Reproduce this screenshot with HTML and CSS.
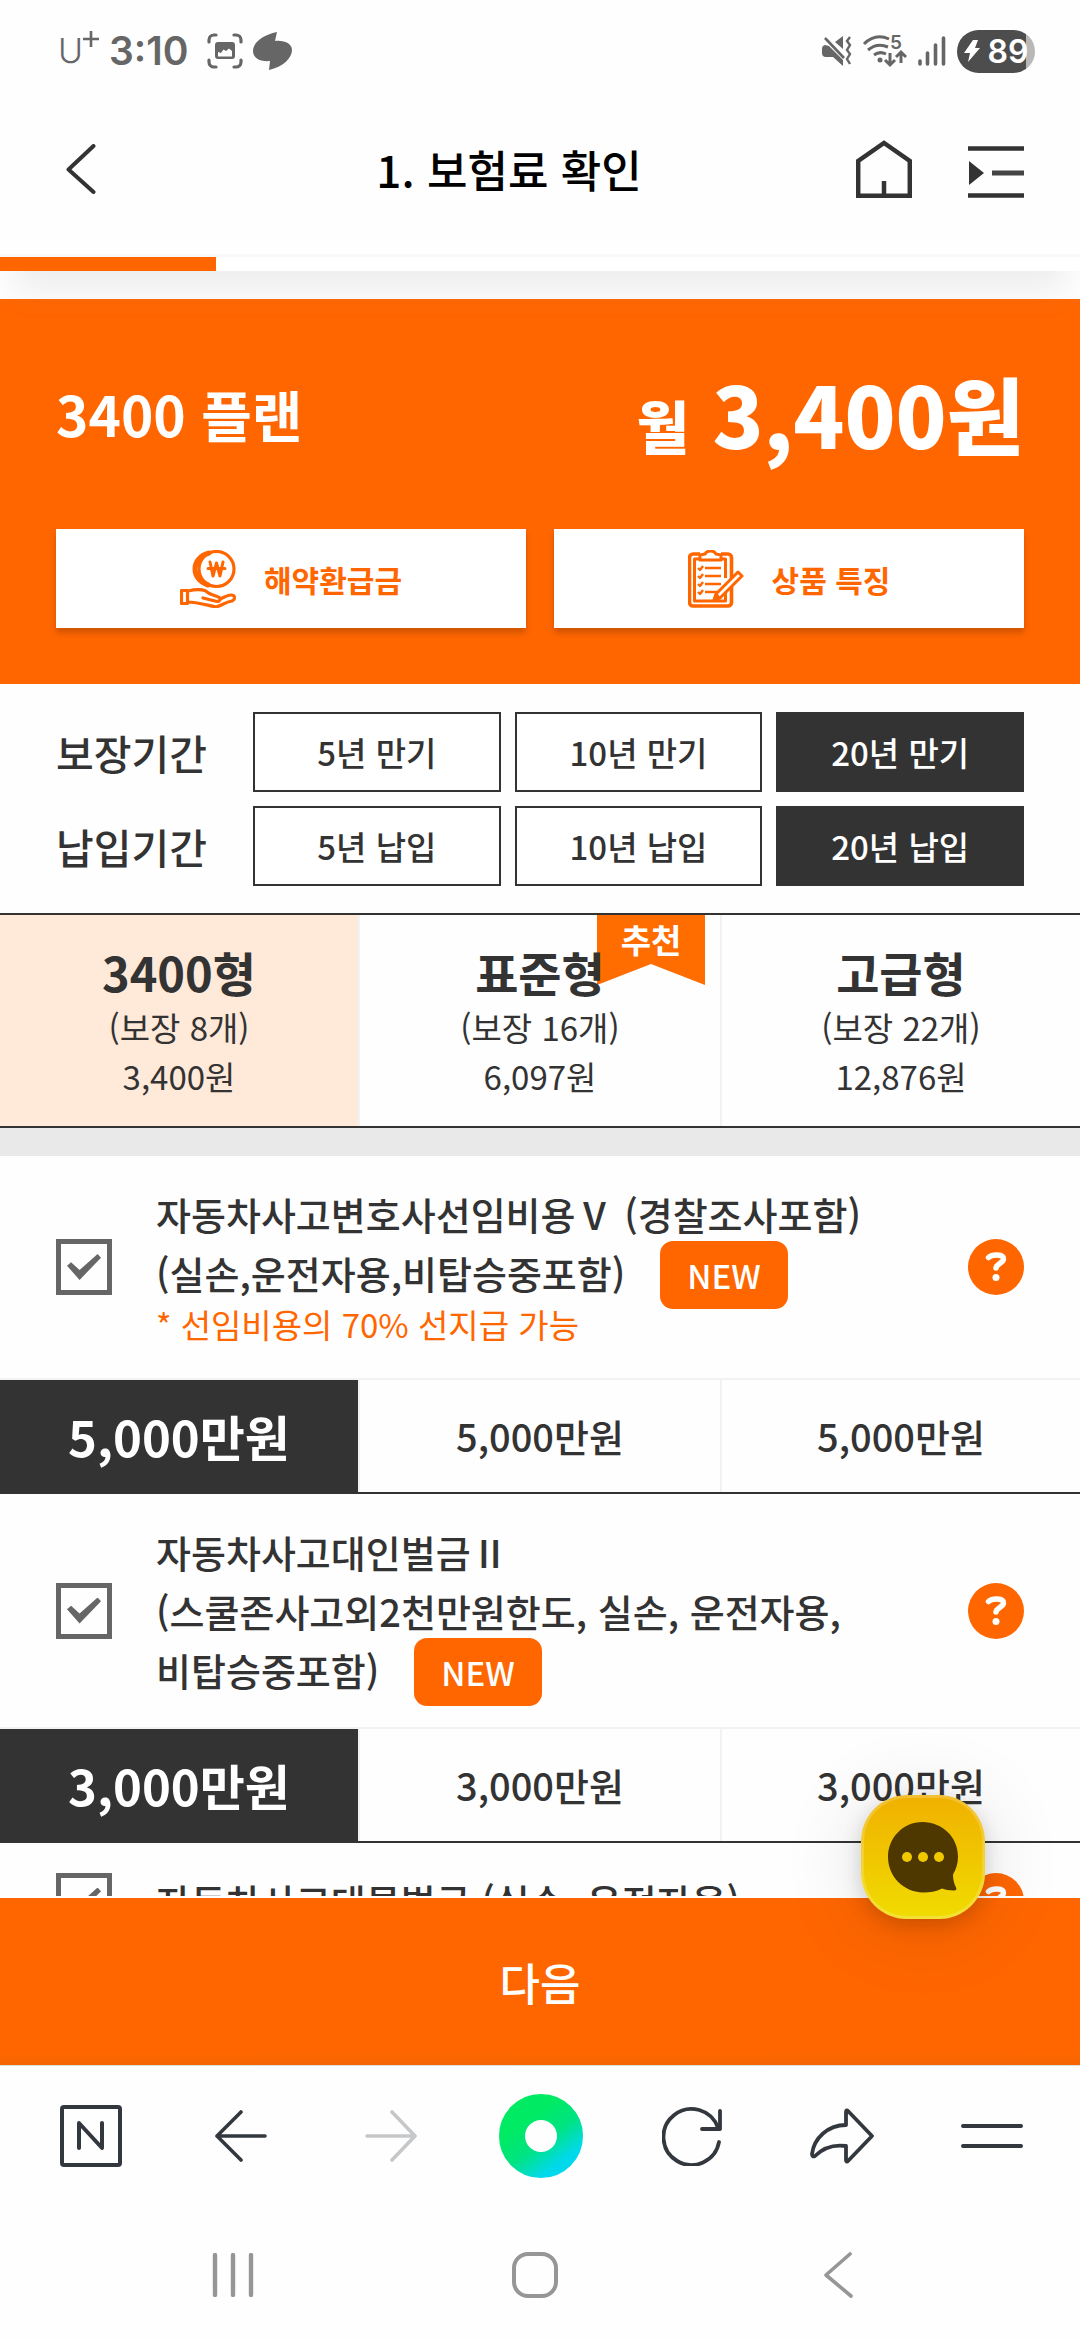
FILE: index.html
```html
<!DOCTYPE html>
<html lang="ko">
<head>
<meta charset="utf-8">
<meta name="viewport" content="width=device-width, initial-scale=1">
<title>1. 보험료 확인</title>
<link rel="stylesheet" href="styles.css">
</head>
<body>
<div class="status-bar">
  <div class="status-left">
    <span class="carrier">U<svg width="16" height="16" viewBox="0 0 16 16"><path d="M8 0v16M0 8h16" stroke="#666" stroke-width="2.6"/></svg></span>
    <span class="clock">3:10</span>
    <svg class="icon-capture" width="36" height="36" viewBox="0 0 36 36"><g fill="none" stroke="#666" stroke-width="3.2" stroke-linecap="round"><path d="M2 9V7a5 5 0 0 1 5-5h2M27 2h2a5 5 0 0 1 5 5v2M34 27v2a5 5 0 0 1-5 5h-2M9 34H7a5 5 0 0 1-5-5v-2"/></g><path fill="#666" fill-rule="evenodd" d="M11 9h14a3 3 0 0 1 3 3v11a3 3 0 0 1-3 3H11a3 3 0 0 1-3-3V12a3 3 0 0 1 3-3zM11 23.500h14V18l-3-2.500-3 2.500-2.500-1.500L14 20l-3-1z"/></svg>
    <svg width="39" height="38" viewBox="0 0 39 38"><path fill="#666" d="M24 0C9 3 0 11 0 19c0 7 7 11 17 10l-1 9c14-3 23-12 23-20 0-6-7-10-17-9z"/></svg>
  </div>
  <div class="status-right">
    <svg width="30" height="30" viewBox="0 0 30 30"><path fill="#666" d="M3 9l4 1 14 14v6l-10-9H4a4 4 0 0 1-4-4v-4a4 4 0 0 1 3-4zM21 0v13l-8-7z"/><path d="M3 2l19 20" stroke="#666" stroke-width="2.600"/><path d="M28 1l-3 4 3 4-3 5 3 4-3 5 3 5" fill="none" stroke="#666" stroke-width="2.400"/></svg>
    <svg class="icon-wifi" width="44" height="32" viewBox="0 0 44 32"><g fill="none" stroke="#666" stroke-width="3"><path d="M1 9C8 2 17 0 26 4M5 15c6-5 13-6 20-3M11 20c4-3 8-3 12-1M27 18v11M22 25l5 5 5-5M38 28V17M33 22l5-5 5 5"/></g><circle cx="17" cy="25" r="2.500" fill="#666"/><text x="27" y="14" class="wifi-band">5</text></svg>
    <svg width="28" height="30" viewBox="0 0 28 30"><path d="M2 25v3M9.500 17v11M17.500 9v19M25.500 2v26" stroke="#666" stroke-width="3.600" stroke-linecap="round"/></svg>
    <span class="battery"><svg width="16" height="22" viewBox="0 0 16 22"><path fill="#fff" d="M9 0h5l-3 8h5L4 22l2-9H0z"/></svg>89</span>
  </div>
</div>

<div class="page-top">
  <header class="header">
    <button class="plain" aria-label="이전"><svg width="30" height="50" viewBox="0 0 30 50"><path d="M27.500 2L2.500 25.500l25 22.500" fill="none" stroke="#333" stroke-width="4" stroke-linecap="round" stroke-linejoin="round"/></svg></button>
    <h1>1. 보험료 확인</h1>
    <div class="header-tools">
      <button class="plain" aria-label="홈"><svg width="56" height="58" viewBox="0 0 56 58"><path d="M2.200 55.800V21L28 3l25.800 18v34.800zM28 55V41" fill="none" stroke="#333" stroke-width="4.500"/></svg></button>
      <button class="plain" aria-label="메뉴"><svg width="56" height="52" viewBox="0 0 56 52"><path d="M0 2.500h56M0 49.500h56" stroke="#333" stroke-width="4.500"/><path d="M24 27h32" stroke="#444" stroke-width="5"/><path d="M1 15v24l15-12z" fill="#333"/></svg></button>
    </div>
  </header>
  <div class="progress"><span class="progress-value"></span></div>
</div>

<main class="content">
  <section class="banner">
    <div class="banner-top">
      <h2>3400 플랜</h2>
      <p class="price"><span class="price-unit">월</span> 3,400원</p>
    </div>
    <div class="banner-actions">
      <button><svg width="56" height="58" viewBox="0 0 56 58"><g fill="none" stroke="#f60" stroke-width="3.200" stroke-linejoin="round" stroke-linecap="round"><circle cx="36.500" cy="19" r="17.500"/><path d="M29 3C10 8 11 30 28 35" stroke-width="5"/><path d="M30 12l3 14 3.500-13L40 26l3-14M28 18.500h17" stroke-width="3"/><path d="M1.500 40.500h6v13h-6zM8 41c8-2 13-2 18 0 3 4 10 4 14 7 1 3-2 4-5 3l-12-3M8 52c8 0 18 3 28 5 5-1 9-5 16-6 4-2 3-6-1-6-4 0-8 3-11 4"/></g></svg>해약환급금</button>
      <button><svg width="56" height="58" viewBox="0 0 56 58"><g fill="none" stroke="#f60" stroke-linejoin="round"><path d="M12 4H5a3.500 3.500 0 0 0-3.500 3.500v45A3.500 3.500 0 0 0 5 56h35a3.500 3.500 0 0 0 3.500-3.500v-45A3.500 3.500 0 0 0 40 4h-7" stroke-width="3.600"/><path d="M12 9H6.500v42h31V38M37.500 28V9H33" stroke-width="3"/><path d="M12 10V5l5-1c2-4 9-4 11 0l5 1v5z" stroke-width="3"/><path d="M17 18h16M17 26h16M17 34h16M17 42h12" stroke-width="2.400"/><path d="M10 18l2 2 3-4M10 26l2 2 3-4M10 34l2 2 3-4M10 42l2 2 3-4" stroke-width="2.400"/><path d="M50 22l4 4-22 22-6 2 2-6z" fill="#fff" stroke-width="3"/></g><path d="M29 43l-3 7 7-2z" fill="#f60"/></svg>상품 특징</button>
    </div>
  </section>

  <section class="periods">
    <div class="period-row">
      <h3>보장기간</h3>
      <button>5년 만기</button>
      <button>10년 만기</button>
      <button class="selected">20년 만기</button>
    </div>
    <div class="period-row">
      <h3>납입기간</h3>
      <button>5년 납입</button>
      <button>10년 납입</button>
      <button class="selected">20년 납입</button>
    </div>
  </section>

  <section class="plans">
    <button class="selected"><strong>3400형</strong><span>(보장 8개)</span><span>3,400원</span></button>
    <button><em class="ribbon">추천</em><strong>표준형</strong><span>(보장 16개)</span><span>6,097원</span></button>
    <button><strong>고급형</strong><span>(보장 22개)</span><span>12,876원</span></button>
  </section>

  <section class="coverage">
    <div class="coverage-head">
      <input type="checkbox" id="cover-1" checked>
      <label for="cover-1">자동차사고변호사선임비용Ⅴ (경찰조사포함)<br>(실손,운전자용,비탑승중포함)<span class="badge">NEW</span><small>* 선임비용의 70% 선지급 가능</small></label>
      <button class="plain" aria-label="도움말"><svg width="56" height="56" viewBox="0 0 56 56"><circle cx="28" cy="28" r="28" fill="#f60"/><path d="M20.500 18.500c4-3.500 15-3.500 15 1.500 0 4-7.500 5-7.500 9" fill="none" stroke="#fff" stroke-width="5.500" stroke-linecap="round" stroke-linejoin="round"/><circle cx="28" cy="38.500" r="3.500" fill="#fff"/></svg></button>
    </div>
    <div class="amounts"><span class="selected">5,000만원</span><span>5,000만원</span><span>5,000만원</span></div>
  </section>

  <section class="coverage">
    <div class="coverage-head">
      <input type="checkbox" id="cover-2" checked>
      <label for="cover-2">자동차사고대인벌금Ⅱ<br>(스쿨존사고외2천만원한도, 실손, 운전자용,<br>비탑승중포함)<span class="badge">NEW</span></label>
      <button class="plain" aria-label="도움말"><svg width="56" height="56" viewBox="0 0 56 56"><circle cx="28" cy="28" r="28" fill="#f60"/><path d="M20.500 18.500c4-3.500 15-3.500 15 1.500 0 4-7.500 5-7.500 9" fill="none" stroke="#fff" stroke-width="5.500" stroke-linecap="round" stroke-linejoin="round"/><circle cx="28" cy="38.500" r="3.500" fill="#fff"/></svg></button>
    </div>
    <div class="amounts"><span class="selected">3,000만원</span><span>3,000만원</span><span>3,000만원</span></div>
  </section>

  <section class="coverage">
    <div class="coverage-head">
      <input type="checkbox" id="cover-3" checked>
      <label for="cover-3">자동차사고대물벌금 (실손, 운전자용)</label>
      <button class="plain" aria-label="도움말"><svg width="56" height="56" viewBox="0 0 56 56"><circle cx="28" cy="28" r="28" fill="#f60"/><path d="M20.500 18.500c4-3.500 15-3.500 15 1.500 0 4-7.500 5-7.500 9" fill="none" stroke="#fff" stroke-width="5.500" stroke-linecap="round" stroke-linejoin="round"/><circle cx="28" cy="38.500" r="3.500" fill="#fff"/></svg></button>
    </div>
  </section>
</main>

<div class="cta">
  <button class="chat" aria-label="채팅 상담"><svg width="72" height="72" viewBox="0 0 72 72"><path fill="#4e3800" d="M35.500 1C55 1 71 16 71 35.500c0 7-2 13-5 18 0 5 1 9 3 13 1 2 0 3-2 3-5 0-9-1-12-2-6 3-12 4-19 4C16 71 1 55 1 36S16 1 35.500 1z"/><g fill="#f0c800"><circle cx="20" cy="36" r="5"/><circle cx="36" cy="36" r="5"/><circle cx="52" cy="36" r="5"/></g></svg></button>
  <button class="next">다음</button>
</div>

<nav class="toolbar">
  <button class="plain" aria-label="네이버 홈"><svg width="64" height="64" viewBox="0 0 64 64"><g fill="none" stroke="#33383f" stroke-width="4" stroke-linecap="round" stroke-linejoin="round"><rect x="3" y="3" width="58" height="58" rx="2"/><path d="M20 44V19l23 25V19"/></g></svg></button>
  <button class="plain" aria-label="뒤로"><svg width="52" height="52" viewBox="0 0 52 52"><path d="M26 2L2 26l24 24M2 26h48" fill="none" stroke="#33383f" stroke-width="3.600" stroke-linecap="round" stroke-linejoin="round"/></svg></button>
  <button class="plain" aria-label="앞으로"><svg width="52" height="52" viewBox="0 0 52 52"><path d="M27 2l23 24-23 24M50 26H2" fill="none" stroke="#c6c7c9" stroke-width="3.600" stroke-linecap="round" stroke-linejoin="round"/></svg></button>
  <button class="plain" aria-label="그린닷"><svg width="84" height="84" viewBox="0 0 84 84"><defs><linearGradient id="dot" x1=".3" y1=".2" x2=".85" y2=".95"><stop offset="0" stop-color="#00ea64"/><stop offset=".5" stop-color="#00e383"/><stop offset="1" stop-color="#00d9ec"/></linearGradient></defs><circle cx="42" cy="42" r="29" fill="none" stroke="url(#dot)" stroke-width="26"/></svg></button>
  <button class="plain" aria-label="새로고침"><svg width="60" height="60" viewBox="0 0 60 60"><g fill="none" stroke="#33383f" stroke-width="3.800" stroke-linecap="round" stroke-linejoin="round"><path d="M57 36A28 28 0 1 1 56 22"/><path d="M58 5v18H40"/></g></svg></button>
  <button class="plain" aria-label="공유"><svg width="64" height="56" viewBox="0 0 64 56"><path d="M36 17V4c0-2 1-2 2-1l24 25-24 25c-1 1-2 1-2-1V38C22 36 12 41 5 48c-2 1-3 0-3-2C4 30 18 17 36 17z" fill="none" stroke="#33383f" stroke-width="3.800" stroke-linejoin="round"/></svg></button>
  <button class="plain" aria-label="메뉴"><svg width="64" height="26" viewBox="0 0 64 26"><path d="M3 3h58M3 23h58" stroke="#33383f" stroke-width="4" stroke-linecap="round"/></svg></button>
</nav>
<nav class="system-nav">
  <button class="plain" aria-label="최근 앱"><svg width="42" height="44" viewBox="0 0 42 44"><path d="M3 2v40M21 2v40M39 2v40" stroke="#969696" stroke-width="4.400" stroke-linecap="round"/></svg></button>
  <button class="plain" aria-label="홈 화면"><svg width="48" height="48" viewBox="0 0 48 48"><rect x="3" y="3" width="42" height="42" rx="14" fill="none" stroke="#969696" stroke-width="4"/></svg></button>
  <button class="plain" aria-label="뒤로가기"><svg width="30" height="46" viewBox="0 0 30 46"><path d="M27 2L3 23l25 21" fill="none" stroke="#969696" stroke-width="3.600" stroke-linecap="round" stroke-linejoin="round"/></svg></button>
</nav>
</body>
</html>
```

FILE: styles.css
```css
* {
  box-sizing: border-box;
}

body {
  display: flex;
  flex-direction: column;
  height: 100vh;
  margin: 0;
  overflow: hidden;
  background: #fefefe;
  color: #333;
  font-family: "Noto Sans CJK KR", "Noto Sans", sans-serif;
}

h1, h2, h3, p {
  margin: 0;
}

button {
  padding: 0;
  border: 0;
  color: inherit;
  font: inherit;
}

svg {
  display: block;
  flex: none;
}

.plain {
  display: flex;
  flex: none;
  align-items: center;
  justify-content: center;
  background: none;
}

/* Phone status bar */
.status-bar {
  display: flex;
  flex: none;
  align-items: center;
  justify-content: space-between;
  height: 84px;
  padding: 18px 45px 0 58px;
  color: #666;
  font-family: Inter, sans-serif;
}

.status-left,
.status-right {
  display: flex;
  align-items: center;
}

.status-left {
  gap: 10px;
}

.status-right {
  gap: 11px;
}

.carrier {
  display: flex;
  font-size: 34px;
  font-weight: 300;
  line-height: 40px;
}

.clock {
  font-size: 39px;
  font-weight: 600;
  line-height: 40px;
}

.icon-capture {
  margin-left: 8px;
}

.icon-wifi {
  overflow: visible;
}

.wifi-band {
  fill: #666;
  font-size: 19px;
  font-weight: 600;
}

.battery {
  display: flex;
  align-items: center;
  justify-content: center;
  gap: 8px;
  width: 78px;
  height: 43px;
  border-radius: 22px;
  background: linear-gradient(90deg, #4d4d4d 88%, #b8b8b8 88%);
  color: #fff;
  font-size: 32px;
  font-weight: 600;
}

/* Page header */
.page-top {
  z-index: 1;
  flex: none;
  background: #fefefe;
  box-shadow: 0 34px 28px -14px rgba(140, 140, 140, 0.14);
}

.header {
  display: flex;
  align-items: center;
  height: 170px;
  padding: 0 56px 0 66px;
}

.header h1 {
  flex: 1;
  padding-left: 66px;
  color: #000;
  font-size: 44px;
  font-weight: 500;
  line-height: 64px;
  text-align: center;
}

.header-tools {
  display: flex;
  align-items: flex-end;
  gap: 56px;
}

.progress {
  height: 17px;
  border-top: 3px solid #f9f9f9;
  background: #fff;
}

.progress-value {
  display: block;
  width: 20%;
  height: 100%;
  background: #f60;
}

.content {
  flex: 1;
  min-height: 0;
  padding-top: 28px;
  overflow: hidden;
}

/* Plan summary */
.banner {
  padding: 56px;
  background: #f60;
  color: #fff;
}

.banner-top {
  display: flex;
  align-items: center;
  justify-content: space-between;
  margin-bottom: 58px;
  line-height: 116px;
}

.banner h2 {
  font-size: 55px;
  font-weight: 700;
}

.price {
  font-size: 84px;
  font-weight: 900;
}

.price-unit {
  font-size: 57px;
  line-height: 1;
}

.banner-actions {
  display: grid;
  grid-template-columns: 1fr 1fr;
  gap: 28px;
}

.banner-actions button {
  display: flex;
  align-items: center;
  justify-content: center;
  gap: 28px;
  height: 99px;
  background: #fff;
  box-shadow: 0 5px 6px rgba(0, 0, 0, 0.18);
  color: #f60;
  font-size: 30px;
  font-weight: 700;
}

/* Period choices */
.periods {
  display: grid;
  gap: 14px;
  padding: 28px 56px 27px;
}

.period-row {
  display: grid;
  grid-template-columns: 183px 1fr 1fr 1fr;
  gap: 14px;
  align-items: center;
}

.period-row h3 {
  font-size: 41px;
  font-weight: 500;
  line-height: 60px;
}

.period-row button {
  height: 80px;
  border: 2px solid #333;
  background: #fff;
  font-size: 33px;
  font-weight: 500;
}

.period-row .selected {
  background: #333;
  color: #fff;
}

/* Plan tabs */
.plans,
.amounts {
  display: grid;
  grid-template-columns: 1fr 1fr 1fr;
}

.plans {
  border-top: 2px solid #333;
  border-bottom: 2px solid #333;
  box-shadow: 0 28px #e9e9e9;
  margin-bottom: 28px;
}

.plans button {
  position: relative;
  display: flex;
  flex-direction: column;
  align-items: center;
  padding: 25px 0;
  background: none;
  font-size: 33px;
  line-height: 49px;
}

.plans strong {
  z-index: 1;
  font-size: 47px;
  font-weight: 700;
  line-height: 63px;
}

.plans button:first-child,
.amounts span:first-child {
  border-right: 2px solid #f2f2f2;
}

.plans button:last-child,
.amounts span:last-child {
  border-left: 2px solid #f2f2f2;
}

.plans .selected {
  background: #ffe9d9;
}

.ribbon {
  position: absolute;
  top: 0;
  right: 15px;
  width: 108px;
  height: 70px;
  background: #ff6c00;
  clip-path: polygon(0 0, 100% 0, 100% 100%, 50% 70%, 0 100%);
  color: #fff;
  font-size: 33px;
  font-style: normal;
  font-weight: 700;
}

/* Coverage list */
.coverage-head {
  display: grid;
  grid-template-columns: 56px 1fr 56px;
  gap: 44px;
  align-items: center;
  padding: 28px 56px;
}

.coverage-head label {
  font-size: 38px;
  font-weight: 500;
  line-height: 59px;
}

.coverage-head small {
  display: block;
  margin-bottom: 4px;
  color: #f60;
  font-size: 33px;
  font-weight: 400;
  line-height: 44px;
}

.coverage-head input {
  appearance: none;
  width: 56px;
  height: 56px;
  margin: 0;
  border: 5px solid #666;
}

.coverage-head input:checked::before {
  display: block;
  width: 34px;
  height: 26px;
  margin: 10px 6px;
  background: #666;
  clip-path: polygon(0 45%, 12% 32%, 37% 62%, 90% 0, 100% 14%, 37% 100%);
  content: "";
}

.badge {
  margin-left: 35px;
  padding: 10px 27px;
  border-radius: 13px;
  background: #f60;
  color: #fff;
  font-size: 33px;
  line-height: 1;
}

.amounts {
  border-top: 2px solid #f2f2f2;
  border-bottom: 2px solid #333;
  font-size: 38px;
  font-weight: 500;
  line-height: 112px;
  text-align: center;
}

.amounts .selected {
  background: #333;
  color: #fff;
  font-size: 49px;
  font-weight: 700;
}

/* Next step bar */
.cta {
  position: relative;
  flex: none;
  border-top: 2px solid #fff;
  border-bottom: 1px solid #ddd;
}

.next {
  display: block;
  width: 100%;
  height: 167px;
  background: linear-gradient(#f60 92%, #f46503);
  color: #fff;
  font-size: 44px;
  font-weight: 500;
}

.chat {
  position: absolute;
  top: -103px;
  right: 95px;
  display: flex;
  align-items: center;
  justify-content: center;
  width: 124px;
  height: 124px;
  border: 3px solid rgba(255, 255, 255, 0.2);
  border-radius: 46px;
  background: linear-gradient(#f0b000, #f0dc00) border-box;
  box-shadow: 0 6px 20px rgba(0, 0, 0, 0.16), 0 6px 84px rgba(0, 0, 0, 0.12);
}

/* Browser toolbar and system navigation */
.toolbar,
.system-nav {
  display: grid;
  flex: none;
  align-items: center;
}

.toolbar {
  grid-template-columns: repeat(7, 1fr);
  height: 139px;
  padding: 0 13px 0 16px;
}

.system-nav {
  grid-template-columns: repeat(3, 1fr);
  height: 135px;
  padding: 4px 91px 0 82px;
}
```
